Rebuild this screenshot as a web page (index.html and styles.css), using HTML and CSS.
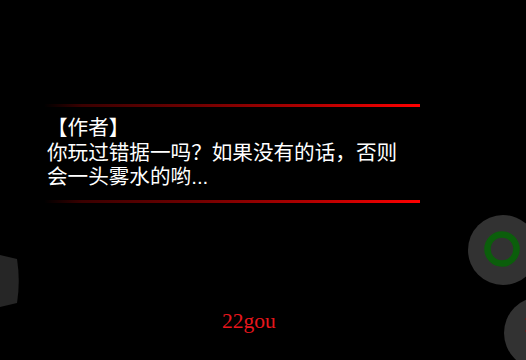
FILE: index.html
```html
<!DOCTYPE html>
<html>
<head>
<meta charset="utf-8">
<link rel="stylesheet" href="styles.css">
</head>
<body>
<div class="stage">
  <div class="dialog">
    <div class="rule"></div>
    <p class="msg">【作者】<br>你玩过错据一吗？如果没有的话，否则<br>会一头雾水的哟...</p>
    <div class="rule"></div>
  </div>
  <div class="brand">22gou</div>

  <svg class="pad-left" width="24" height="60" viewBox="0 0 24 60">
    <path d="M0,5 L17,9 Q20.5,31 17,53 L0,57 Z" fill="#262626"/>
  </svg>
  <svg class="btn-a" width="70" height="70" viewBox="0 0 70 70">
    <circle cx="35" cy="35" r="35" fill="#323232"/>
    <circle cx="34" cy="34" r="14.5" fill="none" stroke="#0b5e0b" stroke-width="6.5"/>
  </svg>
  <svg class="btn-b" width="30" height="70" viewBox="0 0 30 70">
    <circle cx="36" cy="36" r="36" fill="#323232"/>
    <rect x="21" y="21" width="2" height="2" fill="#5a1f1f"/>
    <rect x="21" y="33" width="2" height="2" fill="#5a1f1f"/>
  </svg>
</div>
</body>
</html>
```
FILE: styles.css
```css
html, body {
  margin: 0;
  padding: 0;
  background: #000;
}
.stage {
  position: relative;
  width: 526px;
  height: 360px;
  overflow: hidden;
  background: #000;
}
.dialog {
  padding-top: 104px;
  margin-left: 44px;
  width: 376px;
}
.rule {
  height: 3px;
  background: linear-gradient(to right, rgba(80,0,0,0) 0%, #3a0000 10%, #700000 40%, #b00000 70%, #ff0000 100%);
}
.msg {
  margin: 0;
  padding: 9px 0 10px 3px;
  font-family: "Liberation Sans", "Noto Sans CJK SC", sans-serif;
  font-size: 20.6px;
  line-height: 24.5px;
  color: #fff;
}
.brand {
  margin-top: 106px;
  margin-left: 222px;
  font-family: "Liberation Serif", serif;
  font-size: 21.5px;
  color: #e8161c;
  line-height: normal;
}
.pad-left {
  position: absolute;
  left: 0;
  top: 250px;
}
.btn-a {
  position: absolute;
  left: 468px;
  top: 215px;
}
.btn-b {
  position: absolute;
  left: 504px;
  top: 297px;
}
```
